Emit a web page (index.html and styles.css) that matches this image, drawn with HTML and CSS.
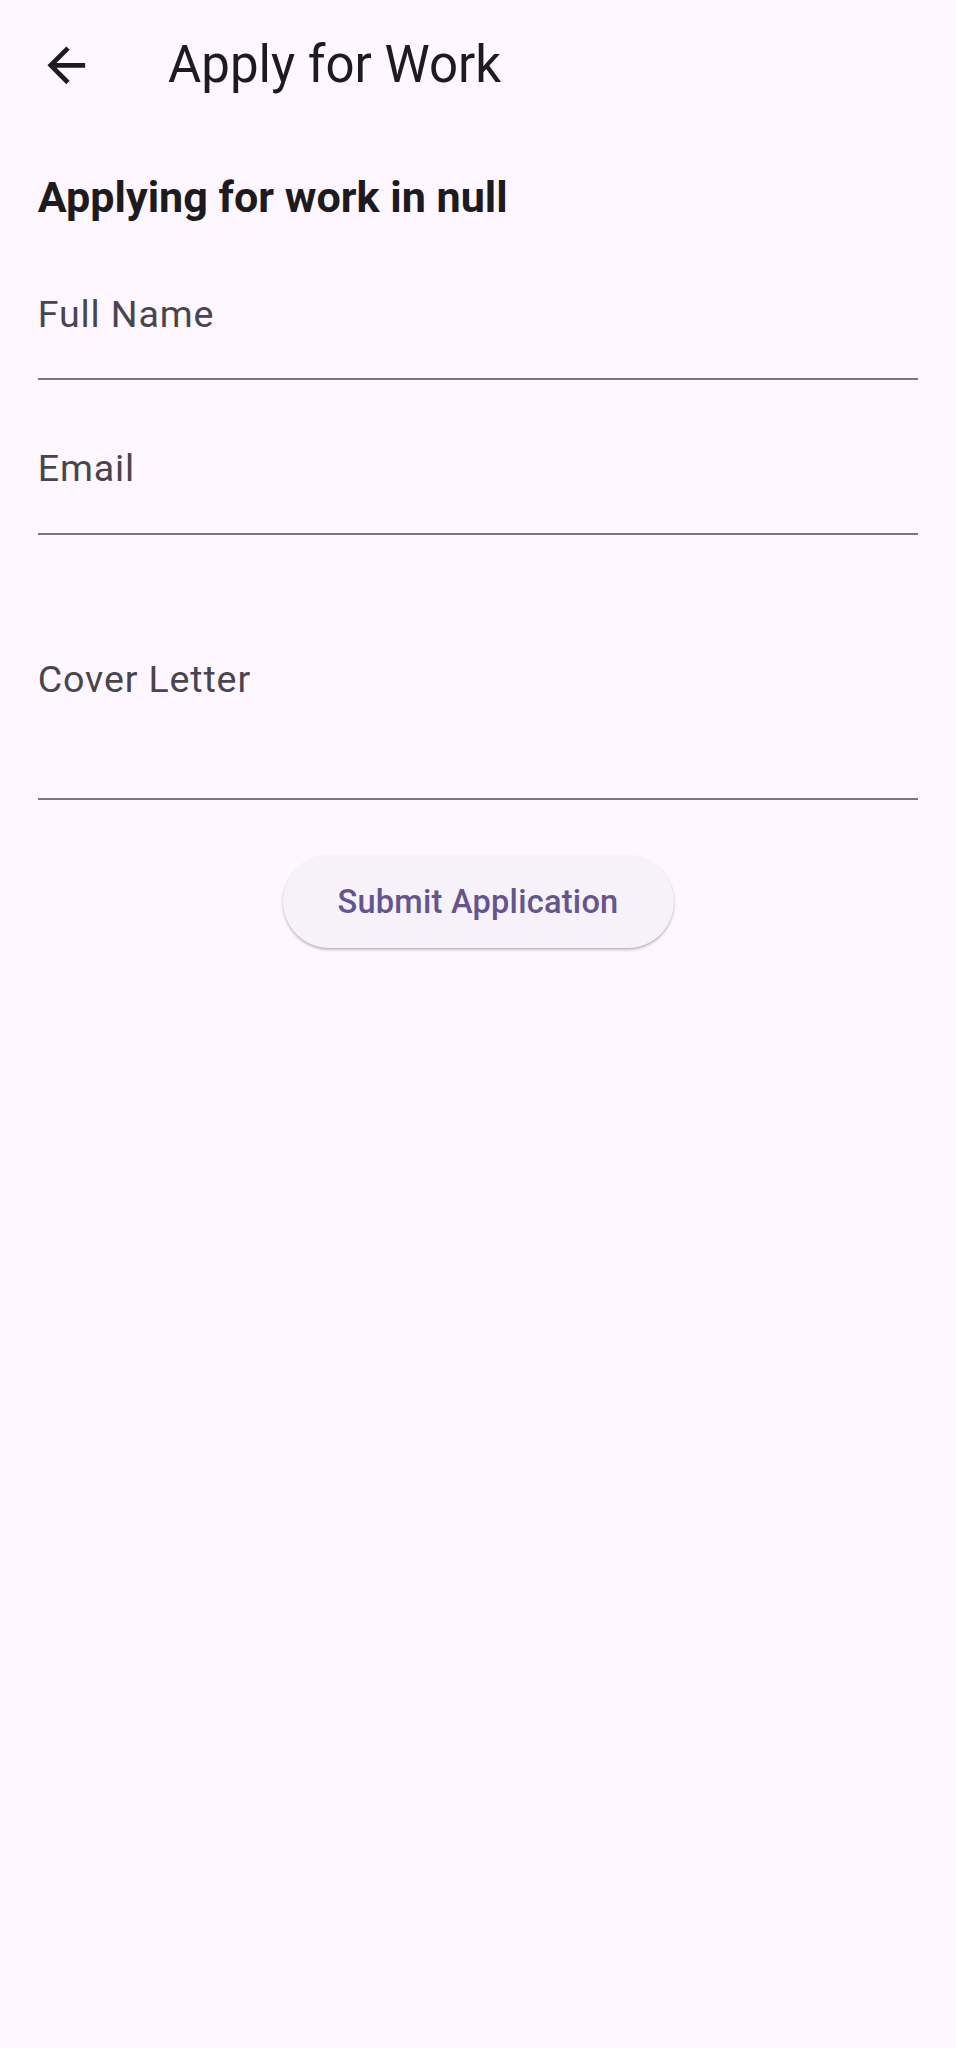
FILE: index.html
```html
<!DOCTYPE html>
<html lang="en">
<head>
<meta charset="utf-8">
<title>Apply for Work</title>
<link rel="stylesheet" href="styles.css">
</head>
<body>
  <header class="app-bar">
    <button class="back-btn" aria-label="Back">
      <svg class="back-icon" viewBox="0 0 24 24" aria-hidden="true">
        <path d="M20 11H7.83l5.59-5.59L12 4l-8 8 8 8 1.41-1.41L7.83 13H20v-2z"/>
      </svg>
    </button>
    <h1 class="app-title">Apply for Work</h1>
  </header>

  <main class="content">
    <h2 class="heading">Applying for work in null</h2>

    <div class="field">
      <span class="field-label">Full Name</span>
    </div>
    <div class="field">
      <span class="field-label">Email</span>
    </div>
    <div class="field field-multiline">
      <span class="field-label">Cover Letter</span>
    </div>

    <div class="actions">
      <button class="submit-btn">Submit Application</button>
    </div>
  </main>
</body>
</html>
```

FILE: styles.css
```css
html, body {
  margin: 0;
  padding: 0;
}

body {
  background: #fef7ff;
  font-family: Roboto, "Noto Sans", "Liberation Sans", sans-serif;
  color: #1d1b20;
  min-height: 2048px;
}

.app-bar {
  display: flex;
  align-items: center;
  height: 130px;
}

.back-btn {
  width: 132px;
  height: 130px;
  padding: 0;
  border: 0;
  background: transparent;
  display: flex;
  align-items: center;
  justify-content: center;
  flex: none;
}

.back-icon {
  width: 56.6px;
  height: 56.6px;
  fill: #1d1b20;
}

.app-title {
  margin: 0 0 0 36px;
  font-size: 51px;
  font-weight: 400;
  line-height: 64px;
  color: #1d1b20;
}

.content {
  padding: 0 37.8px;
}

.heading {
  margin: 40px 0 0;
  font-size: 43.1px;
  font-weight: 700;
  line-height: 56px;
  color: #1d1b20;
}

.field {
  padding: 66px 0 42.4px;
  border-bottom: 2px solid #7a7580;
}

.field-label {
  display: block;
  font-size: 37.6px;
  line-height: 44px;
  letter-spacing: 0.85px;
  color: #49454f;
}

.field-multiline {
  padding-top: 122.4px;
  padding-bottom: 96.8px;
}

.actions {
  display: flex;
  justify-content: center;
  padding-top: 55.4px;
}

.submit-btn {
  height: 93px;
  padding: 0 55px;
  border: 0;
  border-radius: 47px;
  background: #f7f2fa;
  color: #65558f;
  font-family: Roboto, "Noto Sans", "Liberation Sans", sans-serif;
  font-size: 32.6px;
  font-weight: 500;
  letter-spacing: 0.24px;
  box-shadow: 0 2px 3px rgba(0, 0, 0, 0.2), 0 1px 2px rgba(0, 0, 0, 0.1);
}
```
